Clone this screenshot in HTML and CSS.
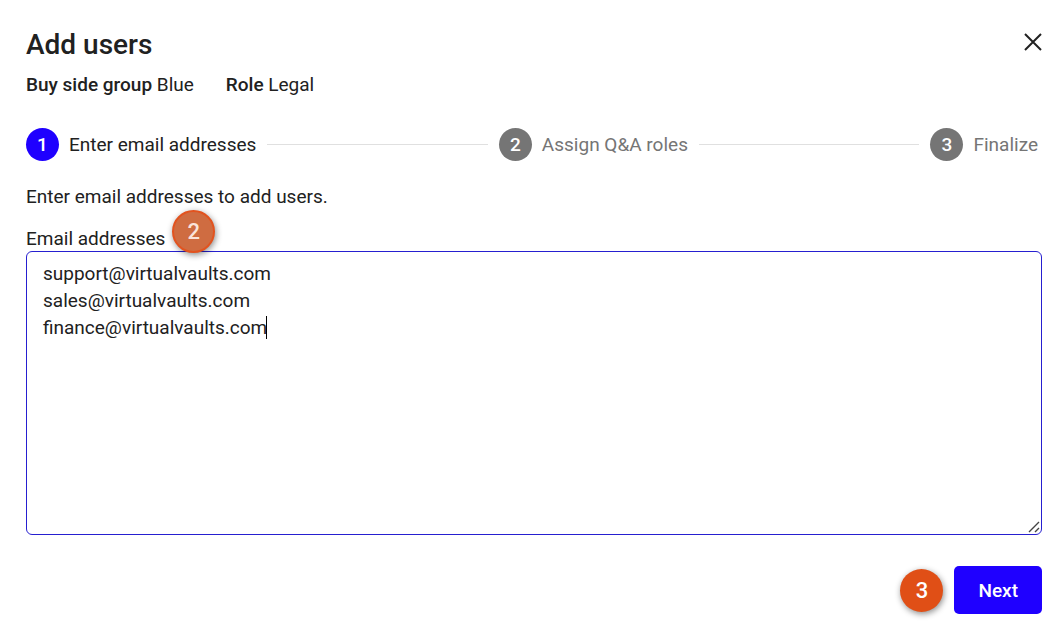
FILE: index.html
```html
<!DOCTYPE html>
<html lang="en">
<head>
    <meta charset="UTF-8">
    <meta name="viewport" content="width=device-width, initial-scale=1.0">
    <title>Add users</title>
    <link rel="stylesheet" href="styles.css">
</head>
<body>
    <main class="dialog">
        <header class="dialog-header">
            <h1>Add users</h1>
            <button type="button" class="close-btn" aria-label="Close">
                <svg width="18" height="18" viewBox="0 0 18 18" fill="none" stroke="currentColor" stroke-width="2">
                    <path d="M1 1L17 17M17 1L1 17"/>
                </svg>
            </button>
        </header>

        <div class="info">
            <span><strong>Buy side group</strong> Blue</span>
            <span><strong>Role</strong> Legal</span>
        </div>

        <ol class="stepper">
            <li class="step active"><span class="step-number">1</span>Enter email addresses</li>
            <li class="step-line" role="presentation"></li>
            <li class="step"><span class="step-number">2</span>Assign Q&amp;A roles</li>
            <li class="step-line" role="presentation"></li>
            <li class="step"><span class="step-number">3</span>Finalize</li>
        </ol>

        <form class="email-form">
            <p>Enter email addresses to add users.</p>
            <div class="label-row">
                <label for="emails">Email addresses</label>
                <span class="marker marker-faded">2</span>
            </div>
            <div class="field">
                <textarea id="emails" rows="10" spellcheck="false">support@virtualvaults.com
sales@virtualvaults.com
finance@virtualvaults.com</textarea>
                <span class="caret"></span>
                <svg class="grip" width="12" height="12" viewBox="0 0 12 12" fill="none" stroke="#444" stroke-width="1.4">
                    <path d="M1 11L11 1M7 11L11 7"/>
                </svg>
            </div>
            <div class="actions">
                <span class="marker">3</span>
                <button type="button" class="next-btn">Next</button>
            </div>
        </form>
    </main>
</body>
</html>
```
FILE: styles.css
```css
* {
    box-sizing: border-box;
}

body {
    margin: 0;
    background-color: #fff;
    color: #212121;
    font-family: Roboto, Arial, sans-serif;
    font-size: 19px;
    line-height: 27px;
}

.dialog {
    padding: 26px 21px 26px 26px;
}

.dialog-header {
    display: flex;
    justify-content: space-between;
    align-items: flex-start;
}

h1 {
    margin: 0;
    font-size: 28px;
    font-weight: 500;
    line-height: 37px;
}

.close-btn {
    display: flex;
    padding: 7px 0;
    border: none;
    background: none;
    color: #212121;
    cursor: pointer;
}

.info {
    display: flex;
    gap: 32px;
    margin-top: 8px;
}

strong {
    font-weight: 500;
}

/* stepper */
.stepper {
    display: flex;
    align-items: center;
    gap: 11px;
    margin: 30px 0 0;
    padding: 0 4px 0 0;
    list-style: none;
}

.step {
    display: flex;
    align-items: center;
    gap: 10px;
    color: #757575;
    white-space: nowrap;
}

.step.active {
    color: #212121;
}

.step-number {
    width: 33px;
    height: 33px;
    border-radius: 50%;
    background-color: #757575;
    color: #fff;
    font-weight: 500;
    line-height: 34px;
    text-align: center;
}

.active .step-number {
    background-color: #1f00ff;
}

.step-line {
    flex: 1;
    border-top: 1px solid #e0e0e0;
}

/* form */
.email-form p {
    margin: 22px 0 0;
}

.label-row {
    display: flex;
    align-items: flex-end;
    gap: 7px;
    height: 41px;
}

.label-row label {
    line-height: 24px;
}

.marker {
    width: 43px;
    height: 43px;
    border-radius: 50%;
    background-color: #e04f16;
    color: #fff;
    box-shadow: 1px 2px 6px rgba(0, 0, 0, 0.45);
    font-size: 22px;
    font-weight: 500;
    line-height: 43px;
    text-align: center;
}

.marker-faded {
    position: relative;
    z-index: 1;
    top: 2px;
    border: 2px solid #e2531f;
    background-color: #cf6c41;
    color: #fae3da;
    line-height: 39px;
}

.field {
    position: relative;
}

textarea {
    display: block;
    width: 100%;
    padding: 8px 16px 4px;
    border: 1px solid #261fd0;
    border-radius: 6px;
    outline: none;
    background-color: #fff;
    color: #212121;
    font: inherit;
    resize: none;
}

/* text cursor after the last address */
.caret {
    position: absolute;
    top: 65px;
    left: 240px;
    width: 1px;
    height: 23px;
    background-color: #000;
}

.grip {
    position: absolute;
    right: 2px;
    bottom: 2px;
    pointer-events: none;
}

.actions {
    display: flex;
    justify-content: flex-end;
    align-items: center;
    gap: 11px;
    margin-top: 31px;
}

.next-btn {
    padding: 11px 24px 10px;
    border: none;
    border-radius: 5px;
    background-color: #1f00ff;
    color: #fff;
    font: inherit;
    font-weight: 500;
    cursor: pointer;
}
```
